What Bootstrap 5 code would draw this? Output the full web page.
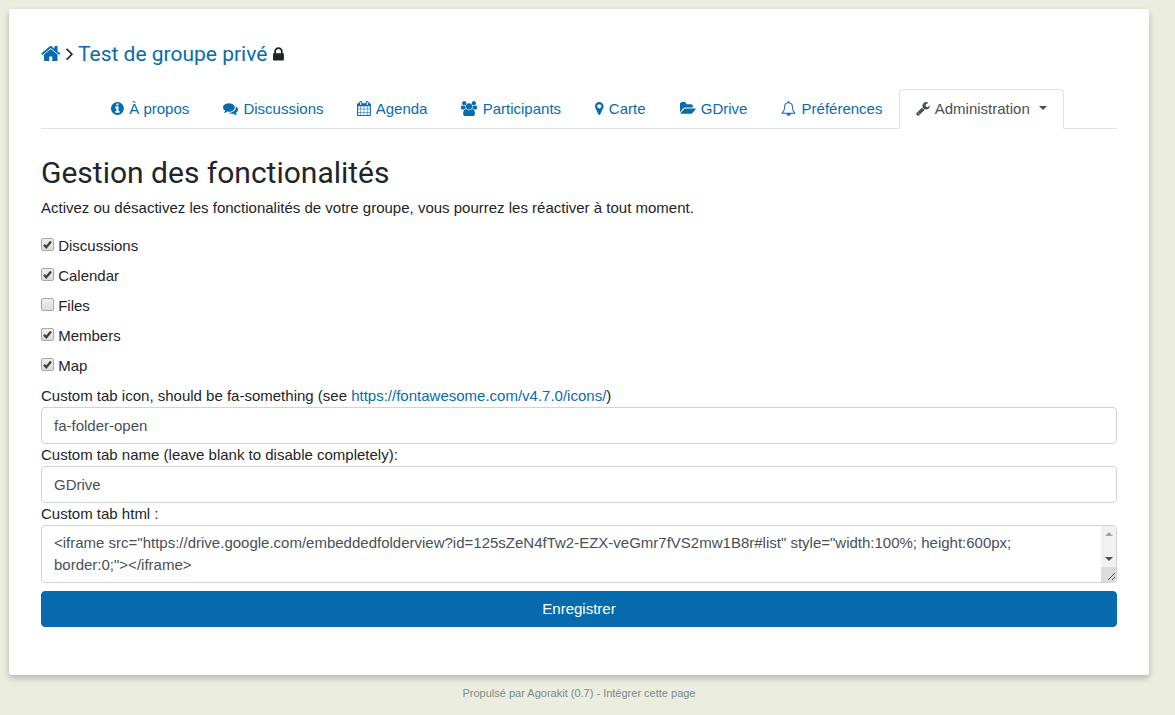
<!DOCTYPE html>
<html lang="fr">
<head>
<meta charset="utf-8">
<meta name="viewport" content="width=device-width, initial-scale=1">
<title>Test de groupe privé</title>
<link rel="stylesheet" href="https://cdn.jsdelivr.net/npm/bootstrap@5.3.0/dist/css/bootstrap.min.css">
<style>
  :root { --brand: #086bae; }
  body { background: #ebeddf; color: #212529; font: 15px/22px "Liberation Sans", Arial, sans-serif; }
  a { color: var(--brand); text-decoration: none; }
  .page { margin: 9px 26px 0 9px; }
  .sheet { background: #fff; border-radius: 3px; padding: 32px 32px 48px; box-shadow: 0 3px 6px rgba(0,0,0,.24); }
  h1, h2 { font-family: Roboto, sans-serif; font-weight: 400; }
  .crumbs { font-size: 21px; line-height: 26px; margin-bottom: 22px; }
  .title { font-size: 30px; line-height: 36px; margin: 26px 0 6px; }
  .fa { height: 1em; vertical-align: -.143em; fill: currentColor; }
  .crumbs .lock { font-size: 17px; }
  .nav-tabs { --bs-nav-tabs-border-color: #dee2e6; --bs-nav-tabs-border-radius: 4px; --bs-nav-link-color: var(--brand); --bs-nav-link-hover-color: var(--brand); --bs-nav-tabs-link-active-color: #495057; --bs-nav-tabs-link-active-border-color: #dee2e6 #dee2e6 #fff; }
  .nav-tabs .nav-link { line-height: 22px; }
  .nav-tabs .fa { margin-right: 1px; }
  .nav-tabs .dropdown-toggle::after { margin-left: 9px; }
  .tick { appearance: none; width: 13px; height: 13px; margin: 0; border: 1px solid #a8a8a8; border-radius: 2px; background: linear-gradient(#efefef, #dcdcdc); }
  .tick:checked { background: url("data:image/svg+xml,%3Csvg xmlns='http://www.w3.org/2000/svg' viewBox='0 0 11 11'%3E%3Cpath d='M2 5.7l2.3 2.6L9 2.6' fill='none' stroke='%23404040' stroke-width='2.3'/%3E%3C/svg%3E"), linear-gradient(#efefef, #dcdcdc); }
  .form-control { font-size: 15px; line-height: 21px; padding: 7px 12px; color: #495057; border: 1px solid #ced4da; border-radius: 4px; }
  textarea.form-control { height: 58px; min-height: 58px; line-height: 22px; padding: 6px 28px 6px 12px; resize: none; }
  .scroller { position: absolute; top: 1px; right: 1px; bottom: 1px; width: 15px; background: #f1f1f1; border-radius: 0 3px 3px 0; overflow: hidden; pointer-events: none; }
  .scroller svg { display: block; }
  .btn-save { --bs-btn-color: #fff; --bs-btn-bg: var(--brand); --bs-btn-border-color: var(--brand); --bs-btn-hover-color: #fff; --bs-btn-hover-bg: #065a93; --bs-btn-font-size: 15px; --bs-btn-line-height: 22px; --bs-btn-border-radius: 4px; }
  .credits { margin: 10px 0 16px; }
  .credits, .credits a { color: #7b8a8b; font-size: 11px; line-height: 16px; }
</style>
</head>
<body>
<div class="page">
  <main class="sheet">
    <h1 class="crumbs">
      <a href="#" aria-label="Accueil"><svg class="fa" viewBox="64 0 1664 1792"><path d="M1472 992v480q0 26-19 45t-45 19h-384v-384h-256v384h-384q-26 0-45-19t-19-45v-480q0-1 .5-3t.5-3l575-474 575 474q1 2 1 6zm223-69l-62 74q-8 9-21 11h-3q-13 0-21-7l-692-577-692 577q-12 8-24 7-13-2-21-11l-62-74q-8-10-7-23.5t11-21.5l719-599q32-26 76-26t76 26l244 204v-195q0-14 9-23t23-9h192q14 0 23 9t9 23v408l219 182q10 8 11 21.5t-7 23.5z"/></svg></a>
      <svg class="fa" viewBox="576 0 640 1792"><path d="M1171 960q0 13-10 23l-466 466q-10 10-23 10t-23-10l-50-50q-10-10-10-23t10-23l393-393-393-393q-10-10-10-23t10-23l50-50q10-10 23-10t23 10l466 466q10 10 10 23z"/></svg>
      <a href="#">Test de groupe privé</a>
      <svg class="fa lock" viewBox="320 0 1152 1792"><path d="M640 768h512v-192q0-106-75-181t-181-75-181 75-75 181v192zm832 96v576q0 40-28 68t-68 28h-960q-40 0-68-28t-28-68v-576q0-40 28-68t68-28h32v-192q0-184 132-316t316-132 316 132 132 316v192h32q40 0 68 28t28 68z"/></svg>
    </h1>

    <ul class="nav nav-tabs justify-content-center">
      <li class="nav-item"><a class="nav-link" href="#"><svg class="fa" viewBox="128 0 1536 1792"><path d="M1152 1376v-160q0-14-9-23t-23-9h-96v-512q0-14-9-23t-23-9h-320q-14 0-23 9t-9 23v160q0 14 9 23t23 9h96v320h-96q-14 0-23 9t-9 23v160q0 14 9 23t23 9h448q14 0 23-9t9-23zm-128-896v-160q0-14-9-23t-23-9h-192q-14 0-23 9t-9 23v160q0 14 9 23t23 9h192q14 0 23-9t9-23zm640 416q0 209-103 385.5t-279.5 279.5-385.5 103-385.5-103-279.5-279.5-103-385.5 103-385.5 279.5-279.5 385.5-103 385.5 103 279.5 279.5 103 385.5z"/></svg> À propos</a></li>
      <li class="nav-item"><a class="nav-link" href="#"><svg class="fa" viewBox="0 0 1792 1792"><path d="M1408 768q0 139-94 257t-256.5 186.5-353.5 68.5q-86 0-176-16-124 88-278 128-36 9-86 16h-3q-11 0-20.5-8t-11.5-21q-1-3-1-6.5t.5-6.5 2-6l2.5-5 3.5-5.5 4-5 4.5-5 4-4.5q5-6 23-25t26-29.5 22.5-29 25-38.5 20.5-44q-124-72-195-177t-71-224q0-139 94-257t256.5-186.5 353.5-68.5 353.5 68.5 256.5 186.5 94 257zm384 256q0 120-71 224.5t-195 176.5q10 24 20.5 44t25 38.5 22.5 29 26 29.5 23 25q1 1 4 4.5t4.5 5 4 5 3.5 5.5l2.5 5 2 6 .5 6.5-1 6.5q-3 14-13 22t-22 7q-50-7-86-16-154-40-278-128-90 16-176 16-271 0-472-132 58 4 88 4 161 0 309-45t264-129q125-92 192-212t67-254q0-77-23-152 129 71 204 178t75 230z"/></svg> Discussions</a></li>
      <li class="nav-item"><a class="nav-link" href="#"><svg class="fa" viewBox="64 0 1664 1792"><path d="M192 1664h288v-288h-288v288zm352 0h320v-288h-320v288zm-352-352h288v-320h-288v320zm352 0h320v-320h-320v320zm-352-384h288v-288h-288v288zm736 736h320v-288h-320v288zm-384-736h320v-288h-320v288zm768 736h288v-288h-288v288zm-384-352h320v-320h-320v320zm-352-864v-288q0-13-9.5-22.5t-22.5-9.5h-64q-13 0-22.5 9.5t-9.5 22.5v288q0 13 9.5 22.5t22.5 9.5h64q13 0 22.5-9.5t9.5-22.5zm736 864h288v-320h-288v320zm-384-384h320v-288h-320v288zm384 0h288v-288h-288v288zm32-480v-288q0-13-9.5-22.5t-22.5-9.5h-64q-13 0-22.5 9.5t-9.5 22.5v288q0 13 9.5 22.5t22.5 9.5h64q13 0 22.5-9.5t9.5-22.5zm384-64v1280q0 52-38 90t-90 38h-1408q-52 0-90-38t-38-90v-1280q0-52 38-90t90-38h128v-96q0-66 47-113t113-47h64q66 0 113 47t47 113v96h384v-96q0-66 47-113t113-47h64q66 0 113 47t47 113v96h128q52 0 90 38t38 90z"/></svg> Agenda</a></li>
      <li class="nav-item"><a class="nav-link" href="#"><svg class="fa" viewBox="0 0 1920 1792"><path d="M593 896q-162 5-265 128h-134q-82 0-138-40.5t-56-118.5q0-353 124-353 6 0 43.5 21t97.5 42.5 119 21.5q67 0 133-23-5 37-5 66 0 139 81 256zm1071 637q0 120-73 189.5t-194 69.5h-874q-121 0-194-69.5t-73-189.5q0-53 3.5-103.5t14-109 26.5-108.5 43-97.5 62-81 85.5-53.5 111.5-20q10 0 43 21.5t73 48 107 48 135 21.5 135-21.5 107-48 73-48 43-21.5q61 0 111.5 20t85.5 53.5 62 81 43 97.5 26.5 108.5 14 109 3.5 103.5zm-1024-1277q0 106-75 181t-181 75-181-75-75-181 75-181 181-75 181 75 75 181zm704 384q0 159-112.5 271.5t-271.5 112.5-271.5-112.5-112.5-271.5 112.5-271.5 271.5-112.5 271.5 112.5 112.5 271.5zm576 225q0 78-56 118.5t-138 40.5h-134q-103-123-265-128 81-117 81-256 0-29-5-66 66 23 133 23 59 0 119-21.5t97.5-42.5 43.5-21q124 0 124 353zm-128-609q0 106-75 181t-181 75-181-75-75-181 75-181 181-75 181 75 75 181z"/></svg> Participants</a></li>
      <li class="nav-item"><a class="nav-link" href="#"><svg class="fa" viewBox="384 0 1024 1792"><path d="M1152 640q0-106-75-181t-181-75-181 75-75 181 75 181 181 75 181-75 75-181zm256 0q0 109-33 179l-364 774q-16 33-47.5 52t-67.5 19-67.5-19-46.5-52l-365-774q-33-70-33-179 0-212 150-362t362-150 362 150 150 362z"/></svg> Carte</a></li>
      <li class="nav-item"><a class="nav-link" href="#"><svg class="fa" viewBox="0 0 1920 1792"><path d="M1879 952q0 31-31 66l-336 396q-43 51-120.5 86.5t-143.5 35.5h-1088q-34 0-60.5-13t-26.5-43q0-31 31-66l336-396q43-51 120.5-86.5t143.5-35.5h1088q34 0 60.5 13t26.5 43zm-343-344v160h-832q-94 0-197 47.5t-164 119.5l-337 396-5 6q0-4-.5-12.5t-.5-12.5v-960q0-92 66-158t158-66h320q92 0 158 66t66 158v32h544q92 0 158 66t66 158z"/></svg> GDrive</a></li>
      <li class="nav-item"><a class="nav-link" href="#"><svg class="fa" viewBox="0 0 1792 1792"><path d="M912 1696q0-16-16-16-59 0-101.5-42.5t-42.5-101.5q0-16-16-16t-16 16q0 73 51.5 124.5t124.5 51.5q16 0 16-16zm-666-288h1300q-266-300-266-832 0-51-24-105t-69-103-121.5-80.5-169.5-31.5-169.5 31.5-121.5 80.5-69 103-24 105q0 532-266 832zm1482 0q0 52-38 90t-90 38h-448q0 106-75 181t-181 75-181-75-75-181h-448q-52 0-90-38t-38-90q50-42 91-88t85-119.5 74.5-158.5 50-206 19.5-260q0-152 117-282.5t307-158.5q-8-19-8-39 0-40 28-68t68-28 68 28 28 68q0 20-8 39 190 28 307 158.5t117 282.5q0 139 19.5 260t50 206 74.5 158.5 85 119.5 91 88z"/></svg> Préférences</a></li>
      <li class="nav-item dropdown"><a class="nav-link active dropdown-toggle" href="#" role="button" data-bs-toggle="dropdown" aria-expanded="false"><svg class="fa" viewBox="64 0 1664 1792"><path d="M448 1472q0-26-19-45t-45-19-45 19-19 45 19 45 45 19 45-19 19-45zm644-420l-682 682q-37 37-90 37-52 0-91-37l-106-108q-38-36-38-90 0-53 38-91l681-681q39 98 114.5 173.5t173.5 114.5zm634-435q0 39-23 106-47 134-164.5 217.5t-258.5 83.5q-185 0-316.5-131.5t-131.5-316.5 131.5-316.5 316.5-131.5q58 0 121.5 16.5t107.5 46.5q16 11 16 28t-16 28l-293 169v224l193 107q5-3 79-48.5t135.5-81 70.5-35.5q15 0 23.5 10t8.5 25z"/></svg> Administration</a></li>
    </ul>

    <h2 class="title">Gestion des fonctionalités</h2>
    <p class="mb-3">Activez ou désactivez les fonctionalités de votre groupe, vous pourrez les réactiver à tout moment.</p>

    <form>
      <div class="mb-2"><input class="tick" type="checkbox" id="f1" checked> <label for="f1">Discussions</label></div>
      <div class="mb-2"><input class="tick" type="checkbox" id="f2" checked> <label for="f2">Calendar</label></div>
      <div class="mb-2"><input class="tick" type="checkbox" id="f3"> <label for="f3">Files</label></div>
      <div class="mb-2"><input class="tick" type="checkbox" id="f4" checked> <label for="f4">Members</label></div>
      <div class="mb-2"><input class="tick" type="checkbox" id="f5" checked> <label for="f5">Map</label></div>
      <label class="d-block" for="icon">Custom tab icon, should be fa-something (see <a href="https://fontawesome.com/v4.7.0/icons/">https://fontawesome.com/v4.7.0/icons/</a>)</label>
      <input class="form-control" type="text" id="icon" value="fa-folder-open">
      <label class="d-block" for="name">Custom tab name (leave blank to disable completely):</label>
      <input class="form-control" type="text" id="name" value="GDrive">
      <label class="d-block" for="html">Custom tab html :</label>
      <div class="position-relative">
        <textarea class="form-control" id="html" rows="2">&lt;iframe src="https://drive.google.com/embeddedfolderview?id=125sZeN4fTw2-EZX-veGmr7fVS2mw1B8r#list" style="width:100%; height:600px; border:0;"&gt;&lt;/iframe&gt;</textarea>
        <div class="scroller d-flex flex-column justify-content-between" aria-hidden="true">
          <svg width="15" height="16"><path d="M4 10l4-4 4 4z" fill="#a3a3a3"/></svg>
          <svg width="15" height="31"><path d="M4 6l4 4 4-4z" fill="#505050"/><path d="M0 16h15v15H0z" fill="#dcdcdc"/><path d="M7 29l7-7M11 29l3-3" stroke="#505050"/></svg>
        </div>
      </div>
      <button class="btn btn-save w-100 mt-2" type="submit">Enregistrer</button>
    </form>
  </main>
  <footer class="credits text-center">Propulsé par <a href="#">Agorakit (0.7)</a> - <a href="#">Intégrer cette page</a></footer>
</div>
<script src="https://cdn.jsdelivr.net/npm/bootstrap@5.3.0/dist/js/bootstrap.bundle.min.js"></script>
</body>
</html>
